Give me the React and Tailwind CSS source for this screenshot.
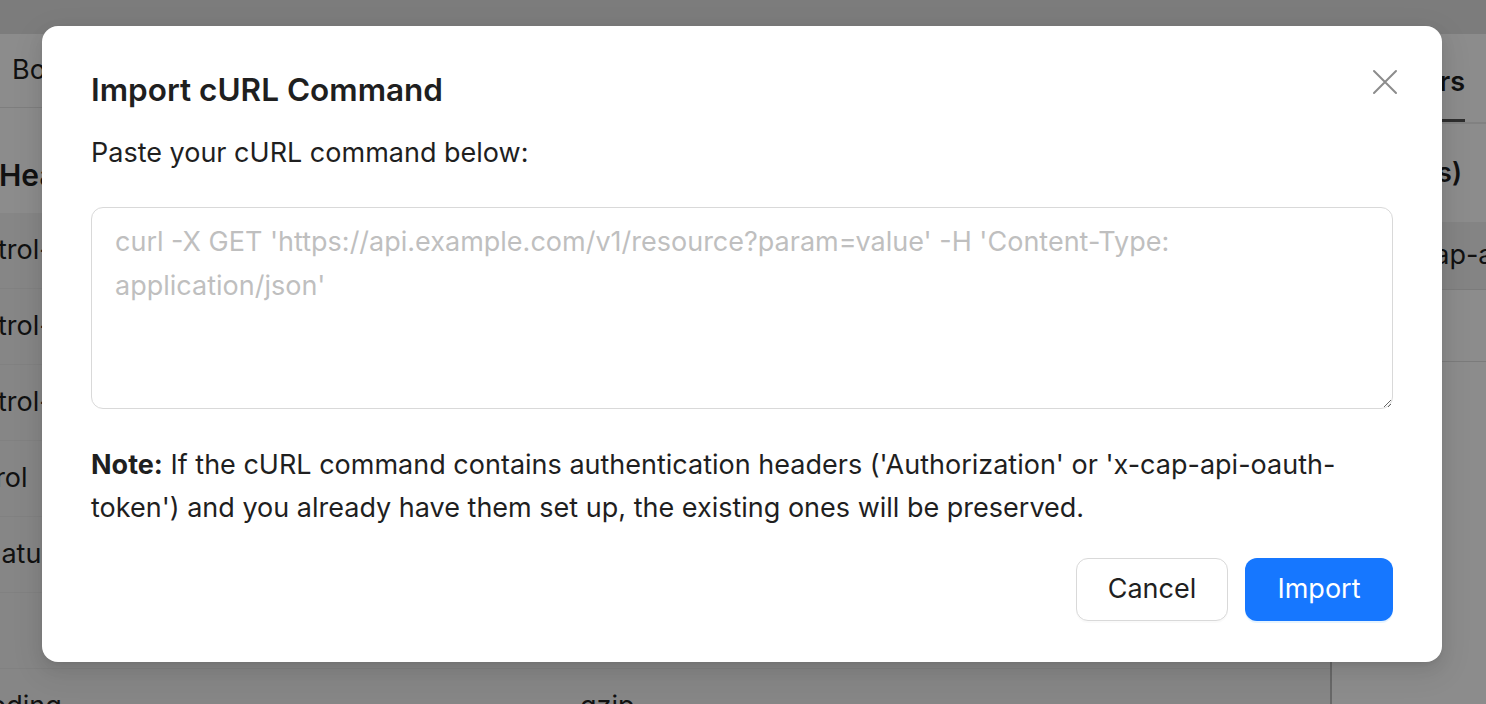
import React from "react";

function CloseIcon() {
  return (
    <svg width="26" height="26" viewBox="0 0 26 26" fill="none" stroke="#8c8c8c" strokeWidth="2" strokeLinecap="round">
      <path d="M2 2 L24 24 M24 2 L2 24" />
    </svg>
  );
}

export default function App() {
  const rows = [
    ["Access-Control-Allow-Origin", "*"],
    ["Access-Control-Allow-Headers", "*"],
    ["Access-Control-Allow-Methods", "GET"],
    ["Cache-Control", "no-cache"],
    ["Header-Signature", "none"],
    ["Connection", "keep-alive"],
    ["Accept-Encoding", "gzip"],
  ];
  return (
    <div className="relative w-[1486px] h-[704px] overflow-hidden bg-white text-[#1f1f1f]" style={{ fontFamily: "Inter, 'Noto Sans', sans-serif" }}>
      {/* background page */}
      <div className="flex flex-col h-full">
        <div className="h-[34px] bg-[#e2e2e2] shrink-0" />
        <div className="flex flex-1 min-h-0">
          <div className="w-[1332px] shrink-0 border-r-2 border-[#bdbdbd] flex flex-col overflow-hidden">
            <div className="h-[74px] shrink-0 border-b border-[#e6e6e6] flex items-center pl-[12px] text-[27px]">Body</div>
            <div className="h-[105px] shrink-0 pt-[50px] text-[30px] leading-[34px] font-semibold -ml-[1px]">Headers</div>
            <div className="bg-[#f4f4f4] -ml-[160px] flex flex-col shrink-0">
              {rows.map(([k, v]) => (
                <div key={k} className="h-[76px] shrink-0 flex items-center text-[27px] border-b border-[#ececec]">
                  <div className="w-[740px] whitespace-nowrap">{k}</div>
                  <div>{v}</div>
                </div>
              ))}
            </div>
          </div>
          <div className="flex-1 min-w-0 overflow-hidden flex flex-col">
            <div className="h-[90px] shrink-0 border-b-2 border-[#ececec] flex items-end justify-end pr-[21px]">
              <div className="text-[27px] font-semibold border-b-[3px] border-[#555] h-[60px] whitespace-nowrap">Headers</div>
            </div>
            <div className="h-[98px] shrink-0 flex items-center justify-end pr-[24px] text-[27px] font-semibold whitespace-nowrap">Response Headers (2 items)</div>
            <div className="h-[68px] shrink-0 bg-[#f0f0f0] border-b border-[#e0e0e0] flex items-center text-[27px] whitespace-nowrap pl-[60px]">x-cap-api-oauth-token</div>
            <div className="h-[72px] shrink-0 border-b border-[#e0e0e0]" />
          </div>
        </div>
      </div>

      {/* mask + modal */}
      <div className="absolute inset-0 bg-black/45">
        <div className="absolute left-[42px] top-[26px] w-[1400px] bg-white rounded-[16px] shadow-[0_6px_16px_0_rgba(0,0,0,0.08),0_3px_6px_-4px_rgba(0,0,0,0.12),0_9px_28px_8px_rgba(0,0,0,0.05)] px-[49px] pt-[46px] pb-[41px]">
          <button className="absolute right-[44px] top-[43px] w-[26px] h-[26px] flex items-center justify-center">
            <CloseIcon />
          </button>
          <div className="text-[31.5px] leading-[36px] font-semibold text-[#1f1f1f]">Import cURL Command</div>
          <div className="mt-[23px] text-[27px] leading-[43px] text-[#1f1f1f]">Paste your cURL command below:</div>
          <textarea
            className="mt-[33px] block w-full h-[202px] border-[1.5px] border-[#d9d9d9] rounded-[12px] px-[23px] py-[12px] text-[27px] leading-[44px] outline-none placeholder:text-[#bfbfbf]"
            style={{ fontFamily: "Inter, 'Noto Sans', sans-serif" }}
            placeholder="curl -X GET 'https://api.example.com/v1/resource?param=value' -H 'Content-Type: application/json'"
          />
          <p className="mt-[34px] text-[27px] leading-[43px] text-[#1f1f1f]">
            <span className="font-bold">Note:</span> If the cURL command contains authentication headers ('Authorization' or 'x-cap-api-oauth-token') and you already have them set up, the existing ones will be preserved.
          </p>
          <div className="mt-[29px] flex justify-end gap-[17px]">
            <button className="w-[152px] h-[63px] rounded-[12px] border-[1.5px] border-[#d9d9d9] bg-white text-[27px] text-[#1f1f1f] shadow-[0_2px_0_rgba(0,0,0,0.02)]">Cancel</button>
            <button className="w-[148px] h-[63px] rounded-[12px] bg-[#1677ff] text-[27px] text-white shadow-[0_2px_0_rgba(5,145,255,0.1)]">Import</button>
          </div>
        </div>
      </div>
    </div>
  );
}
